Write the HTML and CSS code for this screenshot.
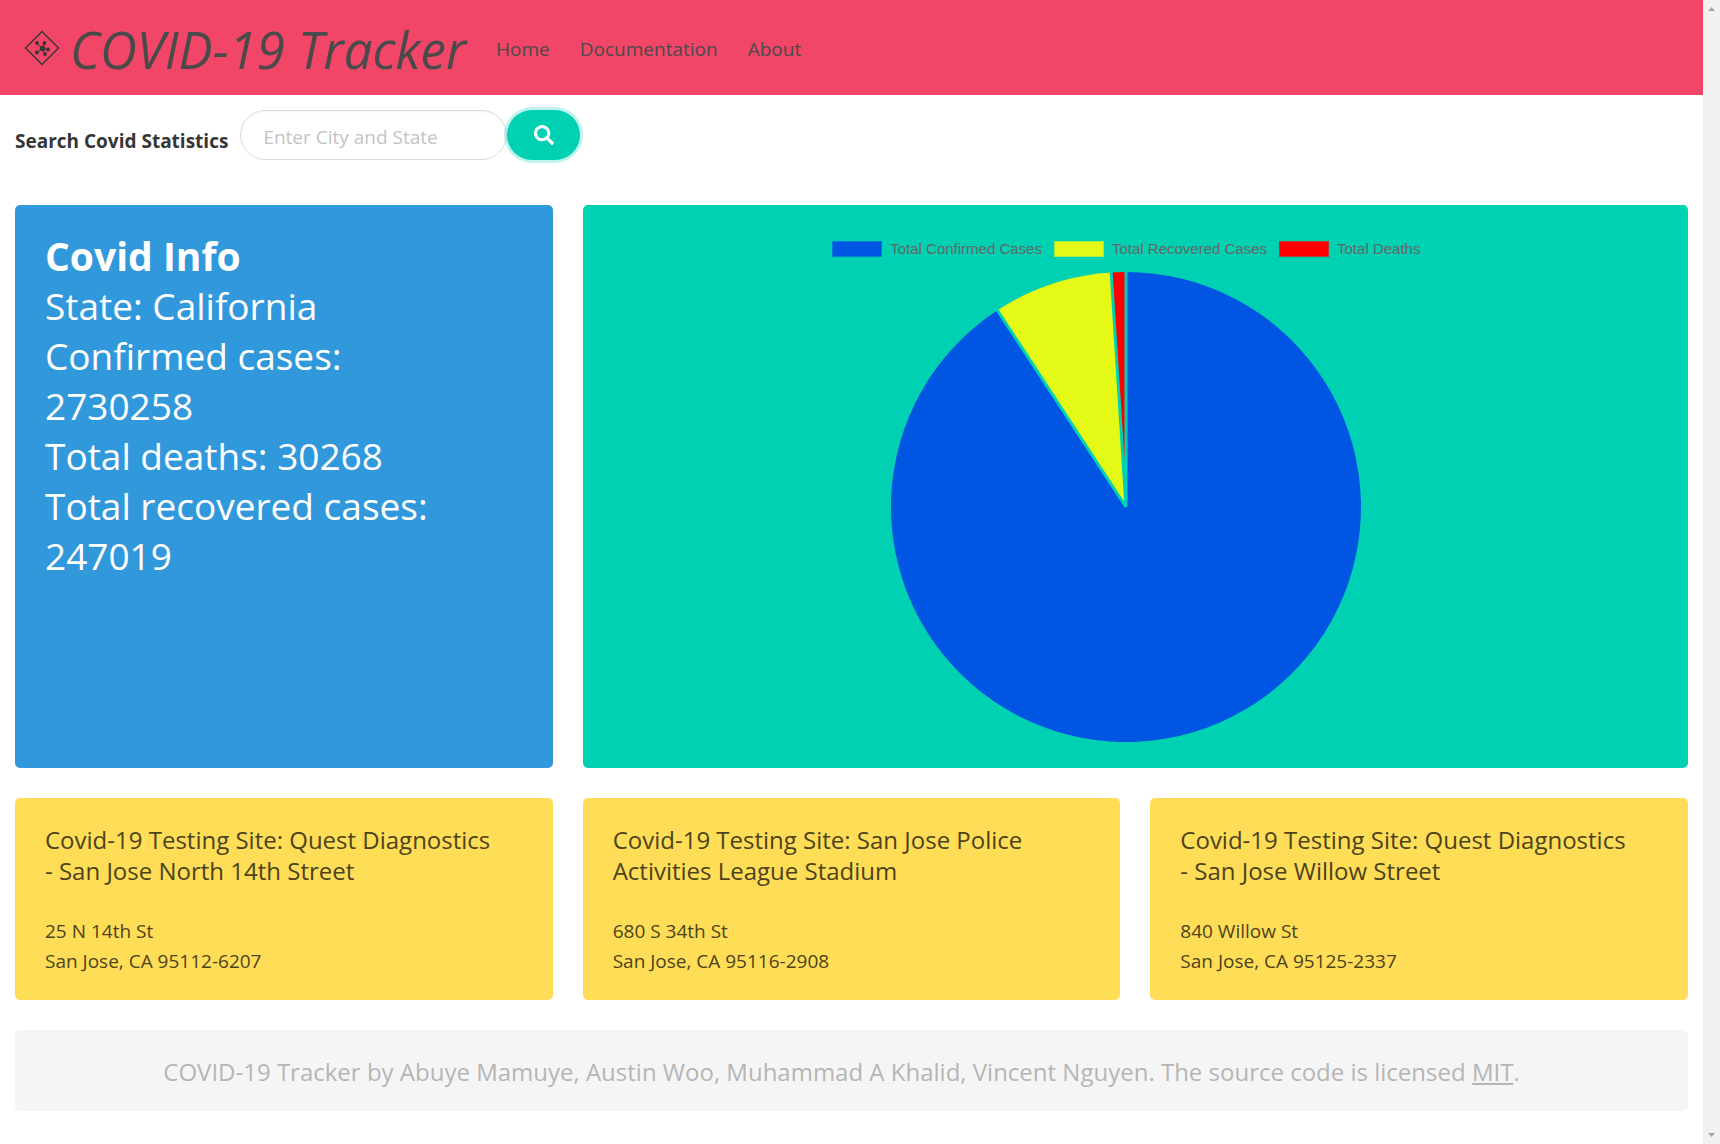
FILE: index.html
```html
<!DOCTYPE html>
<html lang="en">
<head>
  <meta charset="utf-8">
  <meta name="viewport" content="width=device-width, initial-scale=1">
  <title>COVID-19 Tracker</title>
  <link rel="stylesheet" href="styles.css">
</head>
<body>
  <div class="page">
    <header>
      <nav class="navbar">
        <a class="brand" href="#">
          <svg class="brand-icon" viewBox="0 0 36 36" aria-hidden="true">
            <path d="M18 1.500 34.500 18 18 34.500 1.500 18Z" fill="none" stroke="currentColor" stroke-width="1.400"/>
            <path d="M18 18.500 13 13M18 18.500 20.500 13M18 18.500 24 19.500M18 18.500 21 24M18 18.500 13 22.500" stroke="currentColor" stroke-width="1"/>
            <g fill="currentColor">
              <circle cx="18.500" cy="18.500" r="2.800"/>
              <circle cx="13" cy="13" r="1.900"/>
              <circle cx="20.500" cy="13" r="1.900"/>
              <circle cx="24" cy="19.500" r="1.900"/>
              <circle cx="21" cy="24" r="1.900"/>
              <circle cx="13" cy="22.500" r="1.900"/>
            </g>
          </svg>
          <span class="brand-name">COVID-19 Tracker</span>
        </a>
        <a class="nav-link" href="#">Home</a>
        <a class="nav-link" href="#">Documentation</a>
        <a class="nav-link" href="#">About</a>
      </nav>
    </header>

    <form class="search">
      <label class="search-label" for="place">Search Covid Statistics</label>
      <input class="search-input" id="place" type="text" placeholder="Enter City and State">
      <button class="search-button" type="button" aria-label="Search">
        <svg class="search-icon" viewBox="0 0 512 512" aria-hidden="true">
          <path fill="currentColor" d="M505 442.700 405.300 343c-4.500-4.500-10.600-7-17-7H372c27.600-35.300 44-79.700 44-128C416 93.100 322.900 0 208 0S0 93.100 0 208s93.100 208 208 208c48.300 0 92.700-16.400 128-44v16.300c0 6.400 2.500 12.500 7 17l99.700 99.700c9.400 9.400 24.600 9.400 33.900 0l28.300-28.300c9.400-9.400 9.400-24.600.1-34zM208 336c-70.700 0-128-57.200-128-128 0-70.700 57.200-128 128-128 70.700 0 128 57.200 128 128 0 70.700-57.200 128-128 128z"/>
        </svg>
      </button>
    </form>

    <main class="tiles">
      <section class="tile tile-info">
        <h2 class="info-title">Covid Info</h2>
        <p>State: California</p>
        <p>Confirmed cases: 2730258</p>
        <p>Total deaths: 30268</p>
        <p>Total recovered cases: 247019</p>
      </section>

      <section class="tile tile-chart">
        <ul class="legend">
          <li><span class="swatch swatch-confirmed"></span>Total Confirmed Cases</li>
          <li><span class="swatch swatch-recovered"></span>Total Recovered Cases</li>
          <li><span class="swatch swatch-deaths"></span>Total Deaths</li>
        </ul>
        <svg class="pie" viewBox="-236 -236 472 472" role="img" aria-label="Share of confirmed cases, recovered cases and deaths">
          <path class="slice slice-confirmed" d="M0 0V-235A235 235 0 1 1 -128.650 -196.660Z"/>
          <path class="slice slice-recovered" d="M0 0L-128.650 -196.660A235 235 0 0 1 -14.850 -234.530Z"/>
          <path class="slice slice-deaths" d="M0 0L-14.850 -234.530A235 235 0 0 1 0 -235Z"/>
          <path class="divider" d="M0 0V-236M0 0L-129.200 -197.500M0 0L-14.910 -235.530"/>
        </svg>
      </section>

      <article class="tile tile-site">
        <h3 class="site-name">Covid-19 Testing Site: Quest Diagnostics - San Jose North 14th Street</h3>
        <address>25 N 14th St<br>San Jose, CA 95112-6207</address>
      </article>
      <article class="tile tile-site">
        <h3 class="site-name">Covid-19 Testing Site: San Jose Police Activities League Stadium</h3>
        <address>680 S 34th St<br>San Jose, CA 95116-2908</address>
      </article>
      <article class="tile tile-site">
        <h3 class="site-name">Covid-19 Testing Site: Quest Diagnostics - San Jose Willow Street</h3>
        <address>840 Willow St<br>San Jose, CA 95125-2337</address>
      </article>

      <footer class="tile tile-footer">
        COVID-19 Tracker by Abuye Mamuye, Austin Woo, Muhammad A Khalid, Vincent Nguyen. The source code is licensed <a href="#">MIT</a>.
      </footer>
    </main>
  </div>

  <div class="scrollbar" aria-hidden="true">
    <svg viewBox="0 0 7 4"><path d="M0 4 3.500 0 7 4Z"/></svg>
    <svg viewBox="0 0 7 4"><path d="M0 0 3.500 4 7 0Z"/></svg>
  </div>
</body>
</html>
```

FILE: styles.css
```css
* {
  box-sizing: border-box;
}

body {
  display: grid;
  grid-template-columns: minmax(0, 1fr) 17px;
  min-height: 100vh;
  margin: 0;
  background: #fff;
  color: #4a4a4a;
  font: 19px/30px "Open Sans", "Noto Sans", sans-serif;
}

h2, h3, p, ul {
  margin: 0;
  padding: 0;
  font-weight: 400;
}

.navbar {
  display: flex;
  flex-wrap: wrap;
  align-items: center;
  gap: 30px;
  padding: 10px 24px;
  background: #f14668;
}

.brand {
  display: flex;
  align-items: center;
  gap: 10px;
  color: #4a4a4a;
  text-decoration: none;
}

.brand-icon {
  width: 36px;
  height: 36px;
  color: #363636;
}

.brand-name {
  padding-top: 3px;
  font-size: 51px;
  font-style: italic;
  line-height: 72px;
}

.nav-link {
  padding-top: 2px;
  color: #4a4a4a;
  text-decoration: none;
}

.search {
  display: flex;
  align-items: center;
  padding: 15px;
}

.search-label {
  margin-right: 12px;
  padding-top: 12px;
  color: #363636;
  font-weight: 700;
}

.search-input {
  width: 267px;
  height: 50px;
  padding: 4px 22px 0;
  border: 1px solid #dbdbdb;
  border-radius: 25px;
  box-shadow: inset 0 1px 2px rgba(10, 10, 10, 0.05);
  background: #fff;
  color: #363636;
  font: inherit;
}

.search-input::placeholder {
  color: #c3c3c3;
  opacity: 1;
}

.search-button {
  display: flex;
  align-items: center;
  justify-content: center;
  width: 73px;
  height: 50px;
  padding: 0;
  border: 0;
  border-radius: 25px;
  box-shadow: 0 0 0 3px rgba(0, 209, 178, 0.25);
  background: #00d1b2;
  color: #fff;
}

.search-icon {
  width: 20px;
  height: 20px;
}

.tiles {
  display: grid;
  grid-template-columns: repeat(3, minmax(0, 1fr));
  gap: 30px;
  padding: 30px 15px;
}

.tile {
  padding: 26px 50px 24px 30px;
  border-radius: 5px;
}

.tile-info {
  padding-right: 70px;
  background: #3298dc;
  color: #fff;
  font-size: 37px;
  line-height: 50px;
}

.info-title {
  font-size: 39px;
  font-weight: 700;
}

.tile-chart {
  display: flex;
  flex-direction: column;
  align-items: center;
  gap: 13px;
  grid-column: span 2;
  padding: 35px 49px 25px 31px;
  background: #00d1b2;
}

.legend {
  display: flex;
  flex-wrap: wrap;
  justify-content: center;
  gap: 12px;
  color: #666;
  font: 15px/18px "Liberation Sans", Arial, sans-serif;
  list-style: none;
}

.legend li {
  display: flex;
  align-items: center;
  gap: 8px;
}

.swatch {
  width: 50px;
  height: 16px;
  border: 1px solid rgba(0, 209, 178, 0.3);
}

.swatch-confirmed { background: #0055e2; }
.swatch-recovered { background: #e5f916; }
.swatch-deaths { background: #f00; }

.pie {
  width: 472px;
  max-width: 100%;
}

.divider {
  stroke: #00d1b2;
  stroke-width: 3;
}

.slice-confirmed { fill: #0055e2; }
.slice-recovered { fill: #e5f916; }
.slice-deaths { fill: #f00; }

.tile-site {
  background: #ffdd57;
  color: #4d431b;
}

.site-name {
  margin-bottom: 30px;
  font-size: 24px;
  line-height: 31px;
}

address {
  font-style: normal;
}

.tile-footer {
  grid-column: 1 / -1;
  background: #f5f5f5;
  color: #b5b5b5;
  font-size: 24px;
  line-height: 31px;
  text-align: center;
}

.tile-footer a {
  color: inherit;
  text-decoration: underline;
}

.scrollbar {
  position: sticky;
  top: 0;
  display: flex;
  flex-direction: column;
  align-items: center;
  justify-content: space-between;
  height: 100vh;
  padding: 7px 0;
  background: #f1f1f1;
}

.scrollbar svg {
  width: 7px;
  height: 4px;
  fill: #a3a3a3;
}
```
